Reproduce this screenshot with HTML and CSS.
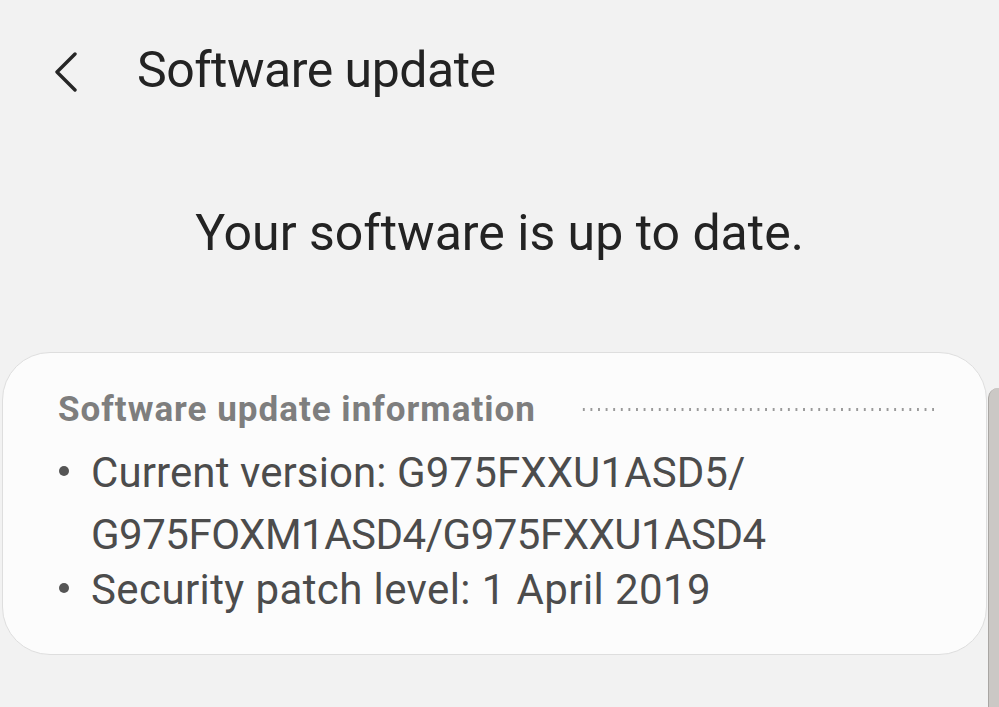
FILE: index.html
```html
<!DOCTYPE html>
<html lang="en">
<head>
<meta charset="utf-8">
<title>Software update</title>
<link rel="stylesheet" href="styles.css">
</head>
<body>
<div class="screen">
  <header class="appbar">
    <span class="back" aria-label="Back">
      <svg width="24" height="40" viewBox="0 0 24 40"><path d="M21 2 L3 20 L21 38" fill="none" stroke="#262626" stroke-width="3.4" stroke-linecap="round" stroke-linejoin="round"/></svg>
    </span>
    <h1 class="title">Software update</h1>
  </header>
  <p class="status">Your software is up to date.</p>
  <section class="card">
    <div class="card-head">
      <h2 class="card-title">Software update information</h2>
      <span class="dots"></span>
    </div>
    <ul class="info">
      <li>Current version: G975FXXU1ASD5/<br><span class="code">G975FOXM1ASD4/G975FXXU1ASD4</span></li>
      <li class="patch">Security patch level: 1 April 2019</li>
    </ul>
  </section>
  <div class="scrollbar"></div>
</div>
</body>
</html>
```

FILE: styles.css
```css
html, body {
  margin: 0;
  padding: 0;
  background: #f2f2f2;
}
body {
  width: 999px;
  height: 707px;
  overflow: hidden;
  font-family: Roboto, "Noto Sans", "Liberation Sans", sans-serif;
}
.screen {
  position: relative;
  height: 707px;
}
.appbar {
  display: flex;
  align-items: center;
  height: 140px;
  padding-left: 54px;
  box-sizing: border-box;
}
.back {
  display: flex;
  width: 24px;
  height: 40px;
  margin-right: 59px;
  margin-top: 4px;
}
.title {
  margin: 0;
  font-size: 50px;
  font-weight: 400;
  color: #232323;
  letter-spacing: -0.5px;
}
.status {
  margin: 0;
  height: 212px;
  padding-top: 63px;
  box-sizing: border-box;
  text-align: center;
  font-size: 50px;
  color: #232323;
  letter-spacing: 0;
  line-height: 60px;
}
.card {
  margin-left: 2px;
  width: 985px;
  height: 303px;
  box-sizing: border-box;
  background: #fcfcfc;
  border: 1px solid #dedede;
  border-radius: 48px;
  padding: 34px 0 0 55px;
}
.card-head {
  display: flex;
  align-items: center;
  height: 44px;
}
.card-title {
  margin: 0;
  font-size: 35px;
  font-weight: 700;
  color: #7e7e7e;
  letter-spacing: 1px;
}
.dots {
  width: 354px;
  height: 3px;
  margin-left: 44px;
  background-image: radial-gradient(circle, #9a9a9a 1.2px, transparent 1.4px);
  background-size: 7.6px 3px;
  background-repeat: repeat-x;
}
.info {
  margin: 11px 0 0;
  padding: 0;
  list-style: none;
}
.info li {
  position: relative;
  padding-left: 33px;
  font-size: 42px;
  line-height: 62px;
  color: #4c4c4c;
  letter-spacing: 0.1px;
}
.info li + li {
  margin-top: -7px;
}
.info .code {
  letter-spacing: -0.5px;
}
.info .patch {
  letter-spacing: 0.4px;
}
.info li::before {
  content: "";
  position: absolute;
  left: 1px;
  top: 24px;
  width: 10px;
  height: 10px;
  border-radius: 50%;
  background: #555;
}
.scrollbar {
  position: absolute;
  right: 0;
  top: 388px;
  width: 10px;
  bottom: 0;
  background: #cbc8c5;
  border-left: 1px solid #a9a6a3;
  border-radius: 10px 0 0 0;
}
```
